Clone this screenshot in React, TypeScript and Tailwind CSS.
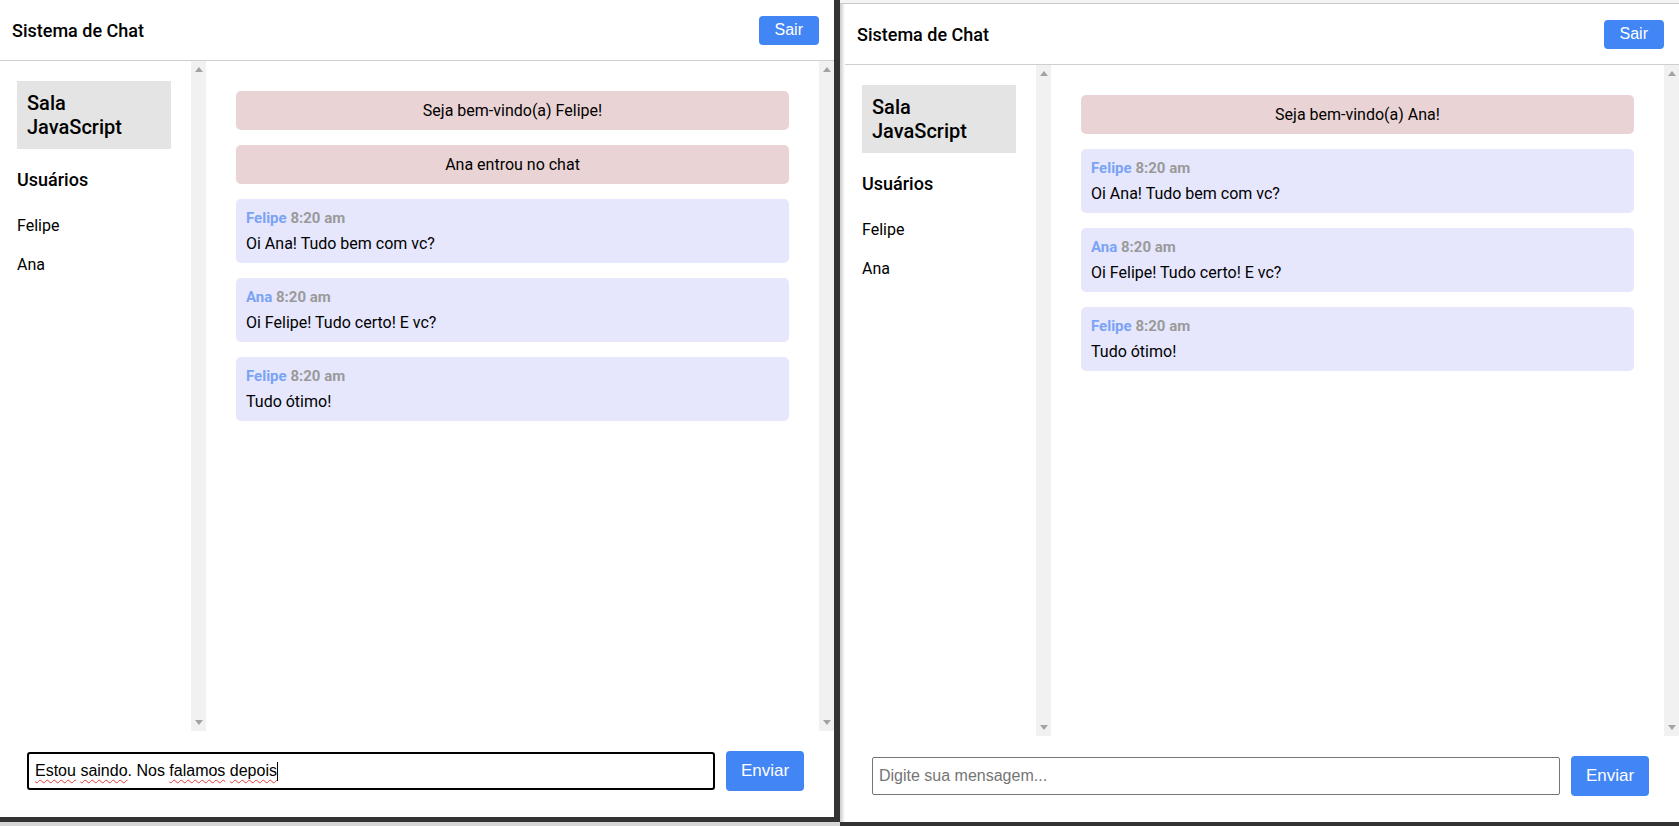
import React from "react";

type Msg =
  | { kind: "notice"; text: string }
  | { kind: "chat"; user: string; time: string; text: string };

const leftMessages: Msg[] = [
  { kind: "notice", text: "Seja bem-vindo(a) Felipe!" },
  { kind: "notice", text: "Ana entrou no chat" },
  { kind: "chat", user: "Felipe", time: "8:20 am", text: "Oi Ana! Tudo bem com vc?" },
  { kind: "chat", user: "Ana", time: "8:20 am", text: "Oi Felipe! Tudo certo! E vc?" },
  { kind: "chat", user: "Felipe", time: "8:20 am", text: "Tudo ótimo!" },
];

const rightMessages: Msg[] = [
  { kind: "notice", text: "Seja bem-vindo(a) Ana!" },
  { kind: "chat", user: "Felipe", time: "8:20 am", text: "Oi Ana! Tudo bem com vc?" },
  { kind: "chat", user: "Ana", time: "8:20 am", text: "Oi Felipe! Tudo certo! E vc?" },
  { kind: "chat", user: "Felipe", time: "8:20 am", text: "Tudo ótimo!" },
];

function ScrollTrack() {
  return (
    <div className="w-[15px] shrink-0 bg-[#f1f1f1] flex flex-col items-center justify-between py-[6px]">
      <svg width="8" height="5" viewBox="0 0 8 5">
        <polygon points="4,0 8,5 0,5" fill="#a3a3a3" />
      </svg>
      <svg width="8" height="5" viewBox="0 0 8 5">
        <polygon points="0,0 8,0 4,5" fill="#a3a3a3" />
      </svg>
    </div>
  );
}

function Message({ msg }: { msg: Msg }) {
  if (msg.kind === "notice") {
    return (
      <div className="bg-[#ead3d4] rounded-[5px] pt-[8px] pb-[7px] text-center text-[16px] leading-[24px] text-black">
        {msg.text}
      </div>
    );
  }
  return (
    <div className="bg-[#e6e7fd] rounded-[5px] px-[10px] pt-[9px] pb-[7px]">
      <div className="text-[15px] leading-[20px] font-bold">
        <span className="text-[#7ba3f5]">{msg.user}</span>{" "}
        <span className="text-[#9a9a9a]">{msg.time}</span>
      </div>
      <p className="mt-[4px] text-[16px] leading-[24px] text-black">{msg.text}</p>
    </div>
  );
}

function ChatWindow({ messages, focused }: { messages: Msg[]; focused: boolean }) {
  return (
    <div className="flex flex-col h-full w-[834px] bg-white font-['Roboto',sans-serif] text-black">
      {/* Header */}
      <header className="h-[61px] shrink-0 border-b border-[#cfcfcf] flex items-center justify-between pl-[12px] pr-[15px]">
        <h1 className="text-[18px] font-medium">Sistema de Chat</h1>
        <button className="bg-[#4285f4] text-white rounded-[4px] px-[16px] h-[29px] text-[16px] font-['Liberation_Sans',Arial,sans-serif]">
          Sair
        </button>
      </header>

      {/* Body */}
      <div className="flex flex-1 min-h-0">
        <aside className="w-[191px] shrink-0 pl-[17px] pr-[20px] pt-[20px]">
          <div className="bg-[#e4e4e4] p-[10px] text-[20px] leading-[24px] font-medium">
            Sala JavaScript
          </div>
          <h3 className="mt-[20px] text-[18px] leading-[22px] font-medium">Usuários</h3>
          <ul className="mt-[23px] flex flex-col gap-[15px] text-[16px] leading-[24px]">
            <li>Felipe</li>
            <li>Ana</li>
          </ul>
        </aside>
        <ScrollTrack />
        <main className="flex-1 p-[30px] flex flex-col gap-[15px]">
          {messages.map((m, i) => (
            <Message key={i} msg={m} />
          ))}
        </main>
        <ScrollTrack />
      </div>

      {/* Footer */}
      <footer className="h-[86px] shrink-0 flex items-start gap-[11px] pl-[27px] pr-[30px] pt-[20px] font-['Liberation_Sans',Arial,sans-serif]">
        {focused ? (
          <div className="flex-1 h-[38px] mt-[1px] border-2 border-black rounded-[3px] px-[6px] flex items-center text-[16px] text-black">
            <span className="underline decoration-wavy decoration-[#e53935] decoration-1 underline-offset-[3px]">Estou</span>
            &nbsp;
            <span className="underline decoration-wavy decoration-[#e53935] decoration-1 underline-offset-[3px]">saindo</span>
            . Nos&nbsp;
            <span className="underline decoration-wavy decoration-[#e53935] decoration-1 underline-offset-[3px]">falamos</span>
            &nbsp;
            <span className="underline decoration-wavy decoration-[#e53935] decoration-1 underline-offset-[3px]">depois</span>
            <span className="w-px h-[19px] bg-black" />
          </div>
        ) : (
          <input
            className="flex-1 h-[38px] mt-[1px] border border-[#767676] rounded-[2px] px-[6px] text-[16px] placeholder:text-[#757575] outline-none"
            placeholder="Digite sua mensagem..."
          />
        )}
        <button className="w-[78px] h-[40px] bg-[#4285f4] text-white rounded-[4px] text-[17px]">
          Enviar
        </button>
      </footer>
    </div>
  );
}

export default function App() {
  return (
    <div className="w-[1679px] h-[826px] overflow-hidden flex bg-[#dcdcdc]">
      {/* Left window */}
      <div className="w-[840px] shrink-0 flex flex-col">
        <div className="h-[822px] border-r-[6px] border-b-[5px] border-[#333333]">
          <ChatWindow messages={leftMessages} focused />
        </div>
        <div className="flex-1 bg-[#d6d6d6]" />
      </div>

      {/* Right window */}
      <div className="flex-1 flex flex-col bg-white">
        <div className="h-[3px] bg-[#f4f4f4]" />
        <div className="h-[823px] flex border-t border-[#c8c8c8] border-b-4 border-b-[#333333]">
          <div className="w-[5px] shrink-0 bg-linear-to-r from-[#cccccc] to-white" />
          <ChatWindow messages={rightMessages} focused={false} />
        </div>
      </div>
    </div>
  );
}
